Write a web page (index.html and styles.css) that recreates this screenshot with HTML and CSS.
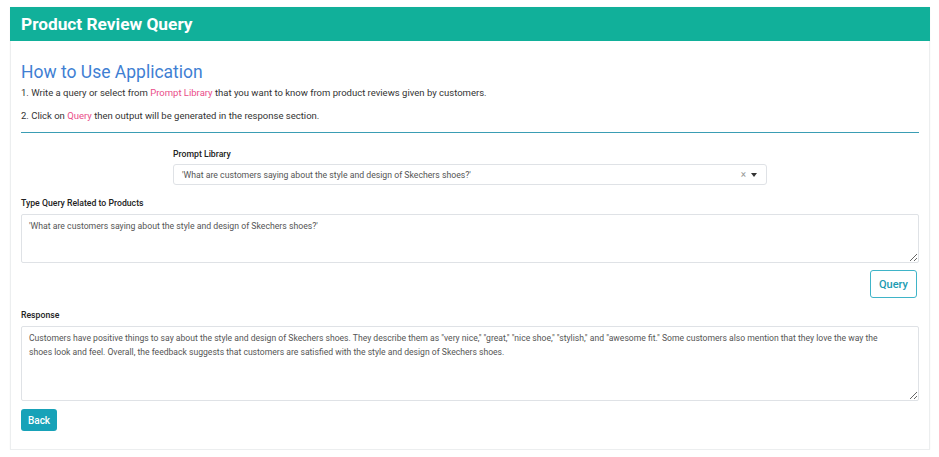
FILE: index.html
```html
<!DOCTYPE html>
<html>
<head>
<meta charset="utf-8">
<link rel="stylesheet" href="styles.css">
</head>
<body>
<div class="card">
  <div class="card-header">Product Review Query</div>
  <div class="card-body">
    <h2 class="title">How to Use Application</h2>
    <p class="step">1. Write a query or select from <span class="hl">Prompt Library</span> that you want to know from product reviews given by customers.</p>
    <p class="step step2">2. Click on <span class="hl">Query</span> then output will be generated in the response section.</p>
    <hr class="divider">
    <div class="lib-row">
      <div class="lib">
        <label class="lbl">Prompt Library</label>
        <div class="select">
          <span class="select-text">'What are customers saying about the style and design of Skechers shoes?'</span>
          <span class="select-x">×</span>
          <span class="caret"></span>
        </div>
      </div>
    </div>
    <label class="lbl lbl-query">Type Query Related to Products</label>
    <textarea class="ta ta-query">'What are customers saying about the style and design of Skechers shoes?'</textarea>
    <div class="btn-row">
      <button class="btn-outline">Query</button>
    </div>
    <label class="lbl lbl-resp">Response</label>
    <textarea class="ta ta-resp">Customers have positive things to say about the style and design of Skechers shoes. They describe them as "very nice," "great," "nice shoe," "stylish," and "awesome fit." Some customers also mention that they love the way the shoes look and feel. Overall, the feedback suggests that customers are satisfied with the style and design of Skechers shoes.</textarea>
    <button class="btn-back">Back</button>
  </div>
</div>
</body>
</html>
```
FILE: styles.css
```css
html, body {
  margin: 0;
  padding: 0;
  background: #fff;
}
body {
  padding: 7px 9px 0 10px;
  font-family: Roboto, "Liberation Sans", sans-serif;
  color: #333;
}
.card {
  border: 1px solid #eceeef;
  border-top: none;
  box-shadow: 0 0 2px rgba(0,0,0,0.04);
  height: 443px;
  box-sizing: border-box;
}
.card-header {
  background: #11b09a;
  color: #fff;
  font-size: 17.3px;
  font-weight: 700;
  height: 34px;
  line-height: 34px;
  padding-left: 11px;
  margin: 0 -1px;
}
.card-body {
  padding: 0 10px 0 10px;
  display: flex;
  flex-direction: column;
}
.title {
  margin: 20px 0 0 0;
  font-size: 17.5px;
  font-weight: 400;
  color: #3f7fd3;
  line-height: 22px;
}
.step {
  margin: 4px 0 0 0;
  font-size: 9.5px;
  line-height: 12px;
  color: #333;
}
.step2 {
  margin-top: 11px;
}
.hl {
  color: #ea4c89;
}
.divider {
  border: none;
  border-top: 1px solid #3a9db4;
  margin: 10px 0 0 0;
  height: 0;
  width: 100%;
}
.lib-row {
  display: flex;
  padding-left: 152px;
  margin-top: 15px;
}
.lib {
  width: 594px;
  display: flex;
  flex-direction: column;
}
.lbl {
  display: block;
  font-size: 8.7px;
  font-weight: 500;
  color: #222;
  line-height: 12px;
}
.select {
  margin-top: 4px;
  height: 21px;
  border: 1px solid #dfe2e6;
  border-radius: 3px;
  box-sizing: border-box;
  display: flex;
  align-items: center;
  padding: 0 9px 0 8px;
  font-size: 8.7px;
  color: #555;
}
.select-text {
  flex: 1;
}
.select-x {
  color: #999;
  font-size: 10px;
  margin-right: 5px;
}
.caret {
  width: 0;
  height: 0;
  border-left: 3.5px solid transparent;
  border-right: 3.5px solid transparent;
  border-top: 4px solid #333;
}
.lbl-query {
  margin-top: 12px;
}
.ta {
  display: block;
  font-family: Roboto, "Liberation Sans", sans-serif;
  font-size: 8.7px;
  line-height: 14px;
  color: #555;
  border: 1px solid #dfe2e6;
  border-radius: 2px;
  box-sizing: border-box;
  width: 100%;
  margin: 5px 0 0 0;
  padding: 4px 7px;
  resize: vertical;
  outline: none;
}
.ta-query {
  height: 49px;
}
.btn-row {
  display: flex;
  justify-content: flex-end;
  margin-top: 7px;
  padding-right: 2px;
}
.btn-outline {
  font-family: Roboto, "Liberation Sans", sans-serif;
  background: #fff;
  border: 1px solid #3fb4c8;
  color: #1b9bb2;
  font-size: 11px;
  font-weight: 500;
  border-radius: 3px;
  width: 47px;
  height: 28px;
  padding: 0;
}
.lbl-resp {
  margin-top: 11px;
}
.ta-resp {
  height: 75px;
  font-size: 8.6px;
  padding: 4px 20px 4px 7px;
}
.btn-back {
  margin-top: 8px;
  align-self: flex-start;
  font-family: Roboto, "Liberation Sans", sans-serif;
  background: #17a2b8;
  border: none;
  color: #fff;
  font-size: 10px;
  font-weight: 500;
  border-radius: 3px;
  width: 36px;
  height: 22px;
  padding: 0;
}
```
